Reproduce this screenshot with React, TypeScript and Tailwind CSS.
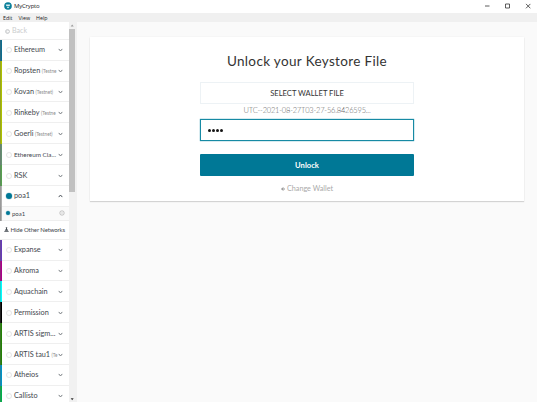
import React from "react";

type Network = { name: string; color: string; test?: string; small?: boolean; open?: boolean };

const mainNetworks: Network[] = [
  { name: "Ethereum", color: "bg-[#0e6d8e]" },
  { name: "Ropsten", color: "bg-[#adc101]", test: "(Testne" },
  { name: "Kovan", color: "bg-[#adc101]", test: "(Testnet)" },
  { name: "Rinkeby", color: "bg-[#adc101]", test: "(Testne" },
  { name: "Goerli", color: "bg-[#adc101]", test: "(Testnet)" },
  { name: "Ethereum Cla...", color: "bg-[#669073]", small: true },
  { name: "RSK", color: "bg-[#58a052]" },
  { name: "poa1", color: "bg-[#b0b0b0]", open: true },
];

const otherNetworks: Network[] = [
  { name: "Expanse", color: "bg-[#673ab7]" },
  { name: "Akroma", color: "bg-[#aa0087]" },
  { name: "Aquachain", color: "bg-[#00ffff]" },
  { name: "Permission", color: "bg-[#000000]" },
  { name: "ARTIS sigm...", color: "bg-[#238006]" },
  { name: "ARTIS tau1", color: "bg-[#238006]", test: "(Te" },
  { name: "Atheios", color: "bg-[#0093c5]" },
  { name: "Callisto", color: "bg-[#00b04a]" },
];

function Chevron({ up }: { up?: boolean }) {
  return (
    <svg viewBox="0 0 5 4" className="h-1 w-[5px] shrink-0" fill="none" stroke={up ? "#4d555c" : "#777d82"} strokeWidth="1">
      <path d={up ? "M.7 3.1 2.5 1l1.8 2.1" : "M.7.9l1.8 2.1L4.3.9"} />
    </svg>
  );
}

function NetworkRow({ name, color, test, small, open }: Network) {
  return (
    <div className="flex h-[20.87px] shrink-0 items-stretch">
      <div className={`w-[2px] shrink-0 border-l border-[#666]/30 ${color}`} />
      <div className="flex min-w-0 grow items-center border-b border-[#efefef] pt-[1.5px] pr-[6px] pl-1">
        {open ? (
          <span className="mr-[2px] size-[6px] shrink-0 rounded-full bg-[#007896] ring-[.5px] ring-[#b9d9e1]" />
        ) : (
          <span className="mr-[2px] size-[6px] shrink-0 rounded-full border border-[#e5e5e5]" />
        )}
        <div className="flex w-[43px] shrink-0 items-baseline whitespace-nowrap">
          <span className={small ? "text-[6.35px] leading-[10px]" : "text-[7.3px] leading-[10px]"}>{name}</span>
          {test && <span className="ml-[1.5px] text-[4.7px] leading-[8px] text-[#8c8c8c]">{test}</span>}
        </div>
        <span className="ml-auto flex">
          <Chevron up={open} />
        </span>
      </div>
    </div>
  );
}

function TitleBar() {
  return (
    <header className="flex h-[13px] shrink-0 items-center bg-white pb-px pl-1 font-['Open_Sans',sans-serif] text-[6px] text-[#222]">
      <svg viewBox="0 0 8 8" className="mr-[2px] size-2">
        <circle cx="4" cy="4" r="3.8" fill="#087f9a" />
        <path d="M1.7 2.4h4.6L5.6 4H2.4zM2.5 4.7h3L4 6.5z" fill="#d9eef1" />
      </svg>
      <span className="leading-[10px] tracking-[-.2px]">MyCrypto</span>
      <svg viewBox="0 0 46 7" className="mr-[6px] ml-auto h-[7px] w-[46px]" fill="none" stroke="#333" strokeWidth=".8">
        <path d="M0 3h4.5M20.5 1h4v4h-4zM41 .9l4.4 4.4M45.4.9 41 5.3" />
      </svg>
    </header>
  );
}

function Sidebar() {
  return (
    <aside className="flex w-[69px] shrink-0 flex-col overflow-hidden bg-white text-[#3f474e]">
      <div className="flex h-[17.8px] shrink-0 items-center border-b border-[#efefef] pt-[1.6px] pl-[5px] text-[7.1px] text-[#cbcdce]">
        <svg viewBox="0 0 5 5" className="mr-[2px] size-[5px]" fill="none" stroke="#b5b8ba" strokeWidth=".8">
          <circle cx="2.5" cy="2.5" r="1.9" />
          <path d="M2.7 1.4 1.6 2.5l1.1 1.1" strokeWidth=".5" />
        </svg>
        Back
      </div>
      {mainNetworks.map((n) => (
        <NetworkRow key={n.name} {...n} />
      ))}
      <div className="flex h-[14.2px] shrink-0">
        <div className="w-[2px] border-l border-[#777]/50 bg-[#b0b0b0]" />
        <div className="flex grow items-center border-b border-[#efefef] bg-[#fafafa] pr-1 pl-1 text-[6px]">
          <span className="mr-[2px] size-1 rounded-full bg-[#007896] ring-[.5px] ring-[#b9d9e1]" />
          poa1
          <svg viewBox="0 0 6 6" className="ml-auto size-[6px]" fill="none" stroke="#aaa" strokeWidth=".7">
            <circle cx="3" cy="3" r="2.2" />
            <path d="m2.2 2.2 1.6 1.6M3.8 2.2 2.2 3.8" strokeWidth=".3" />
          </svg>
        </div>
      </div>
      <div className="flex h-[18.8px] shrink-0 items-center border-b border-[#efefef] pl-1 text-[6px] tracking-[-.12px] whitespace-nowrap">
        <svg viewBox="0 0 5 5" className="mr-[1.5px] size-[5px] shrink-0">
          <path d="M1.7.2h1.6v.5H3v1.1l1.3 2H.7l1.3-2V.7h-.3zM.3 4.1h4.4v.7H.3z" fill="#444b51" />
        </svg>
        Hide Other Networks
      </div>
      {otherNetworks.map((n) => (
        <NetworkRow key={n.name} {...n} />
      ))}
    </aside>
  );
}

function Scrollbar() {
  return (
    <div className="flex w-2 shrink-0 flex-col items-start bg-[#f1f1f1]">
      <svg viewBox="0 0 8 7" className="h-[7px] w-2 shrink-0">
        <path d="m1.7 4.5 1.5-2 1.5 2z" fill="#9b9b9b" />
      </svg>
      <div className="h-[163px] w-[6px] bg-[#c1c1c1]" />
      <svg viewBox="0 0 8 7" className="mt-auto h-[7px] w-2 shrink-0">
        <path d="m1.7 3.2 1.5 2 1.5-2z" fill="#333" />
      </svg>
    </div>
  );
}

function UnlockCard() {
  return (
    <section className="flex h-[164px] w-[434px] flex-col items-center bg-white pt-[15px] shadow-[0_1px_1px_rgba(0,0,0,.14),0_0_2px_rgba(0,0,0,.05)]">
      <h1 className="text-[13.5px] leading-[18px] tracking-[.35px] whitespace-nowrap text-[#333]">Unlock your Keystore File</h1>
      <button className="mt-[12px] h-[22px] w-[214px] border border-[#edf2f5] text-[7.6px] leading-[20px] text-[#333]">SELECT WALLET FILE</button>
      <p className="mt-[2px] text-[7.5px] leading-[10px] font-light tracking-[-.2px] whitespace-nowrap text-[#666]">UTC--2021-08-27T03-27-56.8426595...</p>
      <div className="mt-[3px] flex h-[22px] w-[214px] items-center gap-[1px] border border-[#168aa4] pl-[7px] shadow-[0_0_1px_#168aa4]">
        {[0, 1, 2, 3].map((i) => (
          <span key={i} className="size-[3px] rounded-full bg-[#151515]" />
        ))}
      </div>
      <button className="mt-[13px] h-[22px] w-[214px] rounded-[1px] bg-[#007896] text-[7.6px] leading-[22px] font-bold text-white">Unlock</button>
      <div className="mt-[8px] flex items-center gap-[2px] text-[7.2px] leading-[10px] text-[#aaa]">
        <svg viewBox="0 0 4 4" className="size-1" fill="none" stroke="#888" strokeWidth="1">
          <path d="M2.2.4.7 2l1.5 1.6M.7 2h3.2" />
        </svg>
        Change Wallet
      </div>
    </section>
  );
}

export default function App() {
  return (
    <div className="flex h-[402px] w-[537px] flex-col overflow-hidden bg-[#fafafa] font-[Lato,sans-serif]">
      <TitleBar />
      <nav className="flex h-[9px] shrink-0 items-center gap-[6px] bg-[#f0f0f0] pl-[3px] font-['Open_Sans',sans-serif] text-[5.3px] leading-[8px] text-[#222]">
        <span>Edit</span>
        <span>View</span>
        <span>Help</span>
      </nav>
      <div className="flex min-h-0 grow">
        <Sidebar />
        <Scrollbar />
        <main className="grow pt-[15px] pl-[13px]">
          <UnlockCard />
        </main>
      </div>
    </div>
  );
}
